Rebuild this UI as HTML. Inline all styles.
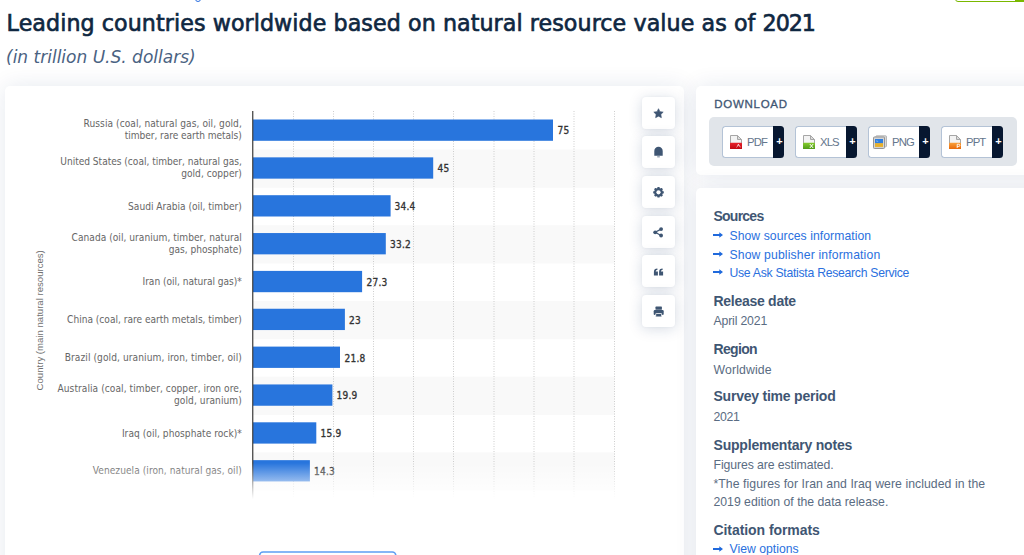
<!DOCTYPE html>
<html lang="en">
<head>
<meta charset="utf-8">
<title>Leading countries worldwide based on natural resource value as of 2021</title>
<style>
html,body{margin:0;padding:0;}
body{width:1024px;height:555px;overflow:hidden;background:#fff;position:relative;font-family:"Liberation Sans",sans-serif;color:#3f5673;}
.abs{position:absolute;}
h1{position:absolute;left:6.6px;top:8.1px;margin:0;font-family:"DejaVu Sans","Liberation Sans",sans-serif;font-size:22.2px;line-height:30px;font-weight:normal;-webkit-text-stroke:.65px #0f2741;color:#0f2741;white-space:nowrap;letter-spacing:.07px;}
.sub{position:absolute;left:6px;top:44.7px;font-family:"DejaVu Sans","Liberation Sans",sans-serif;font-size:17px;line-height:24px;font-style:italic;color:#4a6282;white-space:nowrap;}
.card{position:absolute;background:#fff;border-radius:5px;box-shadow:0 0 22px rgba(20,50,100,.105);}
#chartcard{left:5px;top:86px;width:679px;height:520px;}
#dlcard{left:696px;top:86px;width:400px;height:89px;}
#infocard{left:696px;top:188px;width:400px;height:420px;}
.tool{position:absolute;left:636.5px;width:33px;height:32px;background:#fff;border-radius:4px;box-shadow:0 2px 14px rgba(20,50,100,.17),0 0 3px rgba(20,50,100,.05);}
.tool svg{position:absolute;left:0;top:0;}
.dltitle{position:absolute;left:18.2px;top:10.3px;font-size:11.5px;line-height:16px;letter-spacing:.73px;color:#3f5673;-webkit-text-stroke:.3px #3f5673;}
.dlbox{position:absolute;left:13px;top:31px;width:308px;height:49px;background:#e1e5ea;border-radius:5px;}
.dlbtn{position:absolute;top:9px;width:62px;height:32px;}
.dlbtn .w{position:absolute;left:0;top:0;width:51px;height:32px;box-sizing:border-box;border:1px solid #b4c3d6;border-right:0;border-radius:3.5px 0 0 3.5px;background:#fff;}
.dlbtn .plus{position:absolute;left:51px;top:0;width:11px;height:32px;background:#071730;border-radius:0 3.5px 3.5px 0;color:#fff;font-weight:bold;font-size:11px;line-height:31.500px;text-align:center;text-indent:2px;}
.dlbtn .lbl{position:absolute;left:25px;top:1px;font-size:11.3px;line-height:30px;color:#64768c;letter-spacing:-.9px;}
.dlbtn svg{position:absolute;left:8px;top:8.500px;}
.h{position:absolute;left:17.5px;margin-top:-.1px;font-size:14px;line-height:18px;font-weight:bold;color:#3f5673;white-space:nowrap;}
.v{position:absolute;left:17.5px;font-size:12.25px;line-height:18px;color:#5a6c82;white-space:nowrap;}
.lk{position:absolute;left:17.5px;font-size:12.2px;line-height:18px;color:#2a70de;white-space:nowrap;}
.lk i{display:inline-block;width:16px;height:10px;font-style:normal;position:relative;}
.lk i svg{position:absolute;left:-.3px;top:2.300px;}
#cats text{font-family:"DejaVu Sans Condensed","DejaVu Sans",sans-serif;}
</style>
</head>
<body>
<div class="abs" style="left:955px;top:-6px;width:80px;height:8px;border:1px solid #7ab800;border-radius:3px;background:#fff;box-sizing:border-box;"></div>
<div class="abs" style="left:1015px;top:-6px;width:12px;height:8px;background:#7ab800;"></div>
<div class="abs" style="left:194.500px;top:-4px;width:4px;height:4px;border:1.300px solid #2a6fe0;border-radius:3px;"></div>
<h1>Leading countries worldwide based on natural resource value as of <span style="letter-spacing:-1.1px">2021</span></h1>
<div class="sub">(in trillion U.S. dollars)</div>

<div class="card" id="chartcard">
<svg class="abs" style="left:0;top:0" width="679" height="469" viewBox="5 86 679 469">
  <defs>
    <linearGradient id="fade" x1="0" y1="0" x2="0" y2="1">
      <stop offset="0" stop-color="#fff" stop-opacity="0"/>
      <stop offset="1" stop-color="#fff" stop-opacity="1"/>
    </linearGradient>
  </defs>
  <g id="bands" fill="#f9f9f9">
    <rect x="253" y="149.500" width="361.5" height="38.300"/>
    <rect x="253" y="225.200" width="361.5" height="38.300"/>
    <rect x="253" y="300.900" width="361.5" height="38.300"/>
    <rect x="253" y="376.600" width="361.5" height="38.300"/>
    <rect x="253" y="452.300" width="361.5" height="38.300"/>
  </g>
  <g id="grid" stroke="#cdcdcd" stroke-width="1" stroke-dasharray="1,1.5">
    <path d="M293.5 111V520M333.5 111V520M373.5 111V520M413.5 111V520M453.5 111V520M494 111V520M534 111V520M574 111V520M614.5 111V520"/>
  </g>
  <g id="bars" fill="#2875dd">
    <rect x="253" y="119.5" width="300" height="21.3"/>
    <rect x="253" y="157.35" width="180.2" height="21.3"/>
    <rect x="253" y="195.2" width="137.6" height="21.3"/>
    <rect x="253" y="233.05" width="132.8" height="21.3"/>
    <rect x="253" y="270.9" width="109.1" height="21.3"/>
    <rect x="253" y="308.75" width="91.9" height="21.3"/>
    <rect x="253" y="346.6" width="87.0" height="21.3"/>
    <rect x="253" y="384.45" width="79.4" height="21.3"/>
    <rect x="253" y="422.3" width="63.3" height="21.3"/>
    <rect x="253" y="460.15" width="56.9" height="21.3"/>
  </g>
  <path d="M252.75 111V520" stroke="#3a3a3a" stroke-width="1.2"/>
  <g id="cats" font-size="10.1" fill="#666" text-anchor="end">
    <text x="241.8" y="127" textLength="158.2">Russia (coal, natural gas, oil, gold,</text>
    <text x="241.8" y="139.2" textLength="117.1">timber, rare earth metals)</text>
    <text x="241.8" y="164.8" textLength="181.5">United States (coal, timber, natural gas,</text>
    <text x="241.8" y="177" textLength="60.6">gold, copper)</text>
    <text x="241.8" y="209.5" textLength="113.7">Saudi Arabia (oil, timber)</text>
    <text x="241.8" y="240.5" textLength="170.2">Canada (oil, uranium, timber, natural</text>
    <text x="241.8" y="252.7" textLength="73.0">gas, phosphate)</text>
    <text x="241.8" y="285.2" textLength="99.3">Iran (oil, natural gas)*</text>
    <text x="241.8" y="323" textLength="174.7">China (coal, rare earth metals, timber)</text>
    <text x="241.8" y="360.9" textLength="177.1">Brazil (gold, uranium, iron, timber, oil)</text>
    <text x="241.8" y="392" textLength="184.3">Australia (coal, timber, copper, iron ore,</text>
    <text x="241.8" y="404.2" textLength="67.8">gold, uranium)</text>
    <text x="241.8" y="436.6" textLength="119.9">Iraq (oil, phosphate rock)*</text>
    <text x="241.8" y="474.4" textLength="149.0">Venezuela (iron, natural gas, oil)</text>
  </g>
  <g id="vals" font-size="10" font-weight="normal" fill="#333" stroke="#333" stroke-width=".32" letter-spacing=".22" style="font-family:'DejaVu Sans Condensed','DejaVu Sans',sans-serif">
    <text x="557.5" y="134.4">75</text>
    <text x="437.5" y="172.2">45</text>
    <text x="394.5" y="210.1">34.4</text>
    <text x="390" y="247.9">33.2</text>
    <text x="366.5" y="285.8">27.3</text>
    <text x="349" y="323.6">23</text>
    <text x="344.5" y="361.5">21.8</text>
    <text x="336.5" y="399.3">19.9</text>
    <text x="320.5" y="437.2">15.9</text>
    <text x="314" y="475.0">14.3</text>
  </g>
  <text transform="translate(43.3,320.3) rotate(-90)" text-anchor="middle" font-size="9.6" fill="#707070" style="font-family:'Liberation Sans',sans-serif">Country (main natural resources)</text>
  <rect x="5" y="463" width="625" height="36" fill="url(#fade)"/>
  <rect x="5" y="499" width="625" height="31" fill="#fff"/>
</svg>
</div>
<svg class="abs" style="left:255px;top:548px" width="146" height="10" viewBox="255 548 146 10"><rect x="259.600" y="552" width="136.200" height="30" rx="3.500" fill="#fff" stroke="#5e9ef3" stroke-width="1.600"/></svg>

<!-- tool buttons -->
<div class="tool" style="left:641.5px;top:96.7px"><svg width="33" height="32" viewBox="0 0 33 32"><path fill="#3f5673" stroke="#3f5673" stroke-width=".6" stroke-linejoin="round" d="M16.500 11.700l1.450 2.950 3.250.47-2.350 2.300.55 3.230-2.900-1.520-2.900 1.520.55-3.230-2.350-2.300 3.250-.47z"/></svg></div>
<div class="tool" style="left:641.5px;top:136.3px"><svg width="33" height="32" viewBox="0 0 33 32"><path fill="#3f5673" d="M12.300 19.700v-4.800a4.200 4.200 0 0 1 8.400 0v4.800zM15.200 20.500h2.600v.8h-2.600z"/></svg></div>
<div class="tool" style="left:641.5px;top:175.9px"><svg width="33" height="32" viewBox="0 0 33 32"><g transform="translate(16.500 16.300)"><circle r="3.300" fill="none" stroke="#3f5673" stroke-width="2.200"/><g fill="#3f5673"><rect x="-1.100" y="-5.300" width="2.200" height="10.600" rx=".4"/><rect x="-1.100" y="-5.300" width="2.200" height="10.600" rx=".4" transform="rotate(45)"/><rect x="-1.100" y="-5.300" width="2.200" height="10.600" rx=".4" transform="rotate(90)"/><rect x="-1.100" y="-5.300" width="2.200" height="10.600" rx=".4" transform="rotate(135)"/></g><circle r="2.100" fill="#fff"/></g></svg></div>
<div class="tool" style="left:641.5px;top:215.500px"><svg width="33" height="32" viewBox="0 0 33 32"><g transform="translate(-.2 .3)"><g fill="#3f5673"><circle cx="19.300" cy="12.800" r="1.900"/><circle cx="13.400" cy="16" r="1.900"/><circle cx="19.300" cy="19.200" r="1.900"/></g><path d="M19.300 12.800L13.400 16l5.900 3.200" fill="none" stroke="#3f5673" stroke-width="1.200"/></g></svg></div>
<div class="tool" style="left:641.5px;top:255.100px"><svg width="33" height="32" viewBox="0 0 33 32"><g fill="#3f5673"><path transform="translate(11.900 13.600)" d="M0 6.800V3.300C0 1.200 1.200 0 3.500 0v1.400C2.400 1.400 1.800 2 1.800 3H4v3.800z"/><path transform="translate(17.100 13.600)" d="M0 6.800V3.300C0 1.200 1.200 0 3.500 0v1.400C2.400 1.400 1.800 2 1.800 3H4v3.800z"/></g></svg></div>
<div class="tool" style="left:641.5px;top:294.700px"><svg width="33" height="32" viewBox="0 0 33 32"><g fill="#3f5673" transform="translate(.2 .5)"><rect x="13.300" y="11.100" width="6.400" height="3.200" rx=".6"/><rect x="11.500" y="14.600" width="10" height="5" rx="1.100"/><rect x="13.500" y="18" width="6" height="3.400" rx=".5" stroke="#fff" stroke-width=".8"/></g></svg></div>

<svg width="0" height="0" style="position:absolute"><defs>
<linearGradient id="gpdf" x1="0" y1="0" x2="0" y2="1"><stop offset="0" stop-color="#e8222b"/><stop offset="1" stop-color="#c00812"/></linearGradient>
<linearGradient id="gxls" x1="0" y1="0" x2="0" y2="1"><stop offset="0" stop-color="#86cc2e"/><stop offset="1" stop-color="#4f9a18"/></linearGradient>
<linearGradient id="gppt" x1="0" y1="0" x2="0" y2="1"><stop offset="0" stop-color="#f9a13c"/><stop offset="1" stop-color="#e8690a"/></linearGradient>
</defs></svg>
<div class="card" id="dlcard">
  <div class="dltitle">DOWNLOAD</div>
  <div class="dlbox">
    <div class="dlbtn" style="left:13px"><span class="w"></span><svg width="12" height="14" viewBox="0 0 12 14"><path d="M.5 .5h7l4 4v9h-11z" fill="#f3f3f3" stroke="#a6a6a6"/><path d="M7.500 .5v4h4z" fill="#dcdcdc" stroke="#a6a6a6" stroke-linejoin="round"/><rect x="0" y="7.700" width="12" height="6.300" rx=".6" fill="url(#gpdf)"/><path d="M6.500 12.200c1-.6 1.700-1.700 1.900-3 .3 1.300 1 2.200 2.100 2.700" fill="none" stroke="#fff" stroke-width=".8"/></svg><span class="lbl">PDF</span><span class="plus">+</span></div>
    <div class="dlbtn" style="left:86px"><span class="w"></span><svg width="12" height="14" viewBox="0 0 12 14"><path d="M.5 .5h7l4 4v9h-11z" fill="#f3f3f3" stroke="#a6a6a6"/><path d="M7.500 .5v4h4z" fill="#dcdcdc" stroke="#a6a6a6" stroke-linejoin="round"/><rect x="0" y="7.700" width="12" height="6.300" rx=".6" fill="url(#gxls)"/><path d="M6.800 9l3.400 4M10.200 9l-3.400 4" fill="none" stroke="#fff" stroke-width="1"/></svg><span class="lbl">XLS</span><span class="plus">+</span></div>
    <div class="dlbtn" style="left:159px"><span class="w"></span><svg width="14" height="14" viewBox="0 0 14 14" style="left:5px"><rect x="2.800" y=".8" width="10.700" height="11" rx=".8" fill="#d9d9d9" stroke="#a9a9a9" stroke-width=".8"/><rect x=".5" y="2" width="11" height="11.500" rx=".8" fill="#d4d4d4" stroke="#959595"/><rect x="2" y="4" width="8" height="4.500" fill="#2f7fe0"/><rect x="2" y="8.200" width="8" height="3.700" fill="#e8b02a"/><path d="M3.500 5.200l2 1.200h-2z" fill="#bcd9ff"/></svg><span class="lbl" style="left:24px">PNG</span><span class="plus">+</span></div>
    <div class="dlbtn" style="left:232px"><span class="w"></span><svg width="12" height="14" viewBox="0 0 12 14"><path d="M.5 .5h7l4 4v9h-11z" fill="#f3f3f3" stroke="#a6a6a6"/><path d="M7.500 .5v4h4z" fill="#dcdcdc" stroke="#a6a6a6" stroke-linejoin="round"/><rect x="0" y="7.700" width="12" height="6.300" rx=".6" fill="url(#gppt)"/><path d="M8.200 13V9.300h1.500a1.100 1.100 0 0 1 0 2.200H8.200" fill="none" stroke="#fff" stroke-width=".9"/></svg><span class="lbl">PPT</span><span class="plus">+</span></div>
  </div>
</div>

<div class="card" id="infocard">
  <div class="h" style="top:19.36px;letter-spacing:-0.764px">Sources</div>
  <div class="lk" style="top:38.95px;letter-spacing:0.061px"><i><svg class="ar" width="10" height="6" viewBox="0 0 10 6"><path d="M0 2h6.300V.2L10 3 6.300 5.800V4H0z" fill="#1f69dc"/></svg></i>Show sources information</div>
  <div class="lk" style="top:57.75px;letter-spacing:0.146px"><i><svg class="ar" width="10" height="6" viewBox="0 0 10 6"><path d="M0 2h6.300V.2L10 3 6.300 5.800V4H0z" fill="#1f69dc"/></svg></i>Show publisher information</div>
  <div class="lk" style="top:76.05px;letter-spacing:-0.264px"><i><svg class="ar" width="10" height="6" viewBox="0 0 10 6"><path d="M0 2h6.300V.2L10 3 6.300 5.800V4H0z" fill="#1f69dc"/></svg></i>Use Ask Statista Research Service</div>
  <div class="h" style="top:104.06px;letter-spacing:-0.276px">Release date</div>
  <div class="v" style="top:123.85px;letter-spacing:-0.157px">April 2021</div>
  <div class="h" style="top:152.26px;letter-spacing:-0.675px">Region</div>
  <div class="v" style="top:172.55px;letter-spacing:0.137px">Worldwide</div>
  <div class="h" style="top:199.56px;letter-spacing:-0.225px">Survey time period</div>
  <div class="v" style="top:219.95px;letter-spacing:-0.316px">2021</div>
  <div class="h" style="top:248.36px;letter-spacing:-0.199px">Supplementary notes</div>
  <div class="v" style="top:268.35px;letter-spacing:-0.085px">Figures are estimated.</div>
  <div class="v" style="top:286.55px;letter-spacing:0.053px">*The figures for Iran and Iraq were included in the</div>
  <div class="v" style="top:305.15px;letter-spacing:-0.007px">2019 edition of the data release.</div>
  <div class="h" style="top:333.46px;letter-spacing:-0.066px">Citation formats</div>
  <div class="lk" style="top:352.25px;letter-spacing:0.017px"><i><svg class="ar" width="10" height="6" viewBox="0 0 10 6"><path d="M0 2h6.300V.2L10 3 6.300 5.800V4H0z" fill="#1f69dc"/></svg></i>View options</div>
</div>
</body>
</html>
